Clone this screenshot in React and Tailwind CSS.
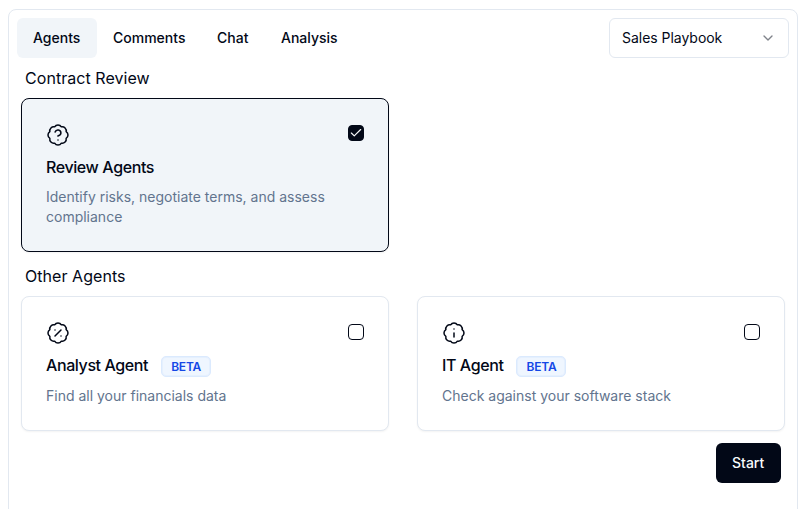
import React from "react";
import { BadgeQuestionMark, BadgePercent, BadgeInfo, Check, ChevronDown } from "lucide-react";

const tabs = [
  { label: "Agents", width: "w-20" },
  { label: "Comments", width: "w-[104px]" },
  { label: "Chat", width: "w-[64px]" },
  { label: "Analysis", width: "w-[88px]" },
];

function Checkbox({ checked }) {
  return (
    <span
      role="checkbox"
      aria-checked={checked}
      className={`flex size-4 items-center justify-center rounded-[4px] border border-[#020817] text-slate-50 ${
        checked ? "mt-0.5 bg-[#020817]" : "mt-[3px] bg-transparent"
      }`}
    >
      {checked && <Check className="size-3.5 shrink-0" strokeWidth={2} />}
    </span>
  );
}

function AgentCard({ icon: Icon, title, description, beta, checked }) {
  return (
    <div
      className={`rounded-lg border p-6 shadow-[0_1px_2px_0_rgb(0_0_0/0.05)] ${
        checked ? "border-[#020817] bg-slate-100" : "border-slate-200 bg-white"
      }`}
    >
      <div className="flex items-start justify-between">
        <Icon className="size-6" strokeWidth={1.5} />
        <Checkbox checked={!!checked} />
      </div>
      <div className="mt-2 flex h-6 items-center">
        <h3 className="text-base font-medium tracking-tight">{title}</h3>
        {beta && (
          <span className="ml-[13px] mt-[3px] flex h-[21px] w-[50px] items-center justify-center rounded-[5px] border border-blue-100 bg-blue-50 text-xs font-semibold tracking-[-0.2px] text-blue-700 shadow-[inset_0_0_0_1px_rgb(219_234_254/0.5)]">
            BETA
          </span>
        )}
      </div>
      <p className={`${beta ? "mt-[9px]" : "mt-2"} text-sm text-slate-500`}>{description}</p>
    </div>
  );
}

export default function App() {
  return (
    <div className="h-[509px] overflow-hidden bg-white px-2 pt-[9px] font-['Inter',sans-serif] text-[#020817]">
      <main className="h-[540px] rounded-lg border border-slate-200">
        <div className="flex justify-between p-2">
          <nav className="flex">
            {tabs.map(({ label, width }, i) => (
              <button
                key={label}
                className={`h-10 rounded-md pl-4 text-left text-sm font-medium ${width} ${i === 0 ? "bg-slate-100" : ""}`}
              >
                {label}
              </button>
            ))}
          </nav>
          <button className="flex h-10 w-[180px] items-center justify-between rounded-md border border-slate-200 px-3 text-sm tracking-[-0.03px]">
            Sales Playbook
            <ChevronDown className="size-4 opacity-50" />
          </button>
        </div>
        <div className="px-3">
          <h2 className="px-1 text-base tracking-[0.05px]">Contract Review</h2>
          <div className="mt-2 grid grid-cols-2 gap-7">
            <AgentCard
              icon={BadgeQuestionMark}
              title="Review Agents"
              description="Identify risks, negotiate terms, and assess compliance"
              checked
            />
          </div>
          <h2 className="mt-3 px-1 text-base tracking-[0.05px]">Other Agents</h2>
          <div className="mt-2 grid grid-cols-2 gap-7">
            <AgentCard icon={BadgePercent} title="Analyst Agent" description="Find all your financials data" beta />
            <AgentCard icon={BadgeInfo} title="IT Agent" description="Check against your software stack" beta />
          </div>
          <div className="mt-3 flex justify-end pr-1">
            <button className="h-10 w-[65px] rounded-md bg-[#020817] pl-4 text-left text-sm font-medium text-slate-50">
              Start
            </button>
          </div>
        </div>
      </main>
    </div>
  );
}
